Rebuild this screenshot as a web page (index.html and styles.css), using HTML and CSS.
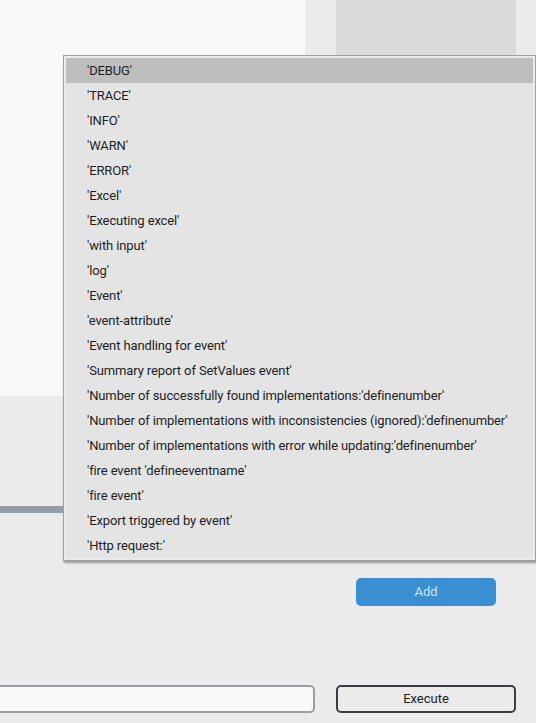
FILE: index.html
```html
<!DOCTYPE html>
<html>
<head>
<meta charset="utf-8">
<link rel="stylesheet" href="styles.css">
</head>
<body>
<div class="page">
  <div class="top">
    <div class="panel"></div>
    <div class="side"></div>
  </div>
  <div class="bar"></div>
  <div class="add-row"><button class="btn-add">Add</button></div>
  <div class="exec-row">
    <input class="cmd" type="text">
    <button class="btn-exec">Execute</button>
  </div>

  <ul class="menu">
    <li class="item active">'DEBUG'</li>
    <li class="item">'TRACE'</li>
    <li class="item">'INFO'</li>
    <li class="item">'WARN'</li>
    <li class="item">'ERROR'</li>
    <li class="item">'Excel'</li>
    <li class="item">'Executing excel'</li>
    <li class="item">'with input'</li>
    <li class="item">'log'</li>
    <li class="item">'Event'</li>
    <li class="item">'event-attribute'</li>
    <li class="item">'Event handling for event'</li>
    <li class="item">'Summary report of SetValues event'</li>
    <li class="item">'Number of successfully found implementations:'definenumber'</li>
    <li class="item">'Number of implementations with inconsistencies (ignored):'definenumber'</li>
    <li class="item">'Number of implementations with error while updating:'definenumber'</li>
    <li class="item">'fire event 'defineeventname'</li>
    <li class="item">'fire event'</li>
    <li class="item">'Export triggered by event'</li>
    <li class="item">'Http request:'</li>
  </ul>
</div>
</body>
</html>
```
FILE: styles.css
```css
html, body {
  margin: 0;
  padding: 0;
}
body {
  background: #ebebeb;
  font-family: Roboto, "Liberation Sans", sans-serif;
  width: 536px;
  height: 723px;
  overflow: hidden;
}
.page {
  position: relative;
  width: 536px;
  height: 723px;
}
.top {
  display: flex;
  gap: 31px;
  height: 396px;
}
.panel {
  width: 305px;
  background: #f8f8f8;
}
.side {
  width: 180px;
  height: 300px;
  background: #dadada;
}
.bar {
  margin-top: 110px;
  width: 300px;
  height: 7px;
  background: #959ea6;
}
.add-row {
  display: flex;
  justify-content: flex-end;
  padding-right: 40px;
  margin-top: 65px;
}
.btn-add {
  width: 140px;
  height: 28px;
  border: none;
  border-radius: 5px;
  background: #3a8ed2;
  color: #d2e3f3;
  font-family: Roboto, "Liberation Sans", sans-serif;
  font-size: 13px;
  padding: 0 0 2px 0;
}
.exec-row {
  display: flex;
  align-items: center;
  margin-top: 79px;
  gap: 21px;
}
.cmd {
  box-sizing: border-box;
  margin-left: -20px;
  width: 335px;
  height: 28px;
  border: 2px solid #9a9ea3;
  border-radius: 5px;
  background: #f8f8f8;
  outline: none;
  padding: 0;
}
.btn-exec {
  box-sizing: border-box;
  width: 180px;
  height: 28px;
  border: 2px solid #3a3e43;
  border-radius: 5px;
  background: #ebebeb;
  color: #1c1c1c;
  font-family: Roboto, "Liberation Sans", sans-serif;
  font-size: 13px;
  padding: 0 0 2px 0;
}
.menu {
  position: absolute;
  left: 63px;
  top: 55px;
  box-sizing: border-box;
  width: 473px;
  margin: 0;
  padding: 2px;
  list-style: none;
  background: #ebebeb;
  border: 1px solid #a0a0a0;
  box-shadow: 1px 2px 2px rgba(0,0,0,0.35);
}
.item {
  height: 25px;
  line-height: 25px;
  padding-left: 21px;
  background: #e4e4e4;
  color: #1e1e1e;
  font-size: 13px;
  letter-spacing: -0.12px;
  white-space: nowrap;
}
.item.active {
  background: #bebebe;
}
```
